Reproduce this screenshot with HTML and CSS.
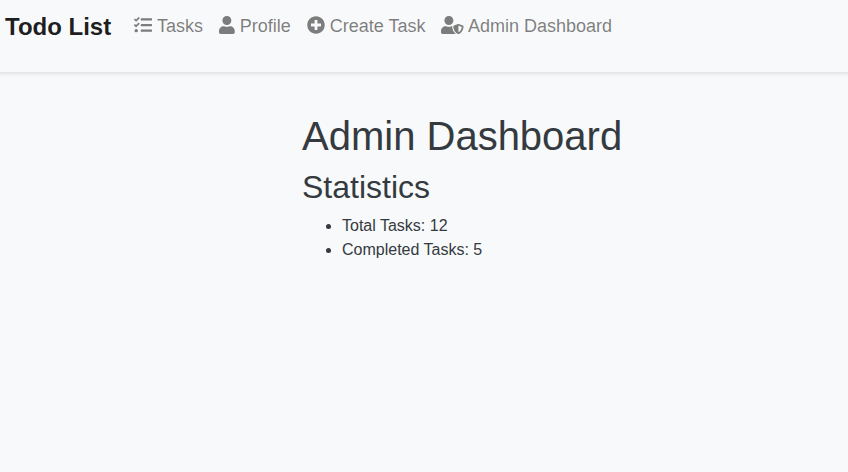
FILE: index.html
```html
<!DOCTYPE html>
<html lang="en">
<head>
<meta charset="utf-8">
<title>Todo List</title>
<link rel="stylesheet" href="styles.css">
</head>
<body>
<nav class="navbar">
  <a class="brand">Todo List</a>
  <ul class="nav">
    <li><a><svg class="icon" viewBox="0 0 512 512"><path d="M139.610 35.500a12 12 0 0 0-17 0L58.930 98.810l-22.700-22.120a12 12 0 0 0-17 0L3.530 92.410a12 12 0 0 0 0 17l47.590 47.400a12.780 12.780 0 0 0 17.610 0l15.590-15.620L156.520 69a12.090 12.090 0 0 0 .09-17zm0 159.190a12 12 0 0 0-17 0l-63.680 63.720-22.700-22.100a12 12 0 0 0-17 0L3.530 252a12 12 0 0 0 0 17L51 316.500a12.770 12.770 0 0 0 17.600 0l15.700-15.690 72.200-72.220a12 12 0 0 0 .09-16.900zM64 368c-26.490 0-48.590 21.500-48.590 48S37.530 464 64 464a48 48 0 0 0 0-96zm432 16H208a16 16 0 0 0-16 16v32a16 16 0 0 0 16 16h288a16 16 0 0 0 16-16v-32a16 16 0 0 0-16-16zm0-320H208a16 16 0 0 0-16 16v32a16 16 0 0 0 16 16h288a16 16 0 0 0 16-16V80a16 16 0 0 0-16-16zm0 160H208a16 16 0 0 0-16 16v32a16 16 0 0 0 16 16h288a16 16 0 0 0 16-16v-32a16 16 0 0 0-16-16z"/></svg> Tasks</a></li>
    <li><a><svg class="icon icon-user" viewBox="0 0 448 512"><path d="M224 256c70.700 0 128-57.300 128-128S294.700 0 224 0 96 57.300 96 128s57.300 128 128 128zm89.600 32h-16.700c-22.200 10.200-46.900 16-72.900 16s-50.600-5.800-72.900-16h-16.700C60.200 288 0 348.200 0 422.400V464c0 26.500 21.500 48 48 48h352c26.500 0 48-21.500 48-48v-41.600c0-74.200-60.200-134.400-134.400-134.400z"/></svg> Profile</a></li>
    <li><a><svg class="icon" viewBox="0 0 512 512"><path d="M256 8C119 8 8 119 8 256s111 248 248 248 248-111 248-248S393 8 256 8zm144 276c0 6.600-5.400 12-12 12h-92v92c0 6.600-5.400 12-12 12h-56c-6.600 0-12-5.400-12-12v-92h-92c-6.600 0-12-5.400-12-12v-56c0-6.600 5.400-12 12-12h92v-92c0-6.600 5.400-12 12-12h56c6.600 0 12 5.400 12 12v92h92c6.600 0 12 5.400 12 12v56z"/></svg> Create Task</a></li>
    <li><a><svg class="icon icon-shield" viewBox="0 0 640 512"><path d="M622.300 271.100l-115.200-45c-4.100-1.600-12.600-3.700-22.200 0l-115.200 45c-10.700 4.200-17.700 14-17.700 24.900 0 111.600 68.700 188.800 132.900 213.900 9.600 3.700 18 1.600 22.200 0C558.400 489.900 640 420.500 640 296c0-10.900-7-20.700-17.700-24.900zM496 462.400V273.300l95.500 37.300c-5.600 87.100-60.900 135.400-95.500 151.800zM224 256c70.700 0 128-57.300 128-128S294.700 0 224 0 96 57.300 96 128s57.300 128 128 128zm96 40c0-2.500.8-4.800 1.100-7.200-2.500-.1-4.900-.8-7.500-.8h-16.700c-22.200 10.200-46.900 16-72.900 16s-50.600-5.800-72.900-16h-16.700C60.200 288 0 348.200 0 422.400V464c0 26.500 21.500 48 48 48h352c6.800 0 13.300-1.500 19.200-4-54-42.900-99.200-116.700-99.200-212z"/></svg> Admin Dashboard</a></li>
  </ul>
</nav>
<main class="content">
  <h1>Admin Dashboard</h1>
  <h2>Statistics</h2>
  <ul>
    <li>Total Tasks: 12</li>
    <li>Completed Tasks: 5</li>
  </ul>
</main>
</body>
</html>
```

FILE: styles.css
```css
* { box-sizing: border-box; }
body {
  margin: 0;
  min-height: 100vh;
  overflow: hidden;
  background: #f8f9fa;
  color: #343a40;
  font: 400 16px/1.5 "Liberation Sans", Arial, sans-serif;
}
.navbar {
  display: flex;
  align-items: flex-start;
  height: 72px;
  margin: 0 -11px;
  padding: 9px 16px;
  background: #f8f9fa;
  box-shadow: 0 2px 4px rgba(0, 0, 0, .1);
}
.brand {
  margin-right: 15px;
  color: rgba(0, 0, 0, .9);
  font-size: 24px;
  font-weight: 700;
  line-height: 36px;
}
.nav {
  display: flex;
  margin: 0;
  padding: 0;
  list-style: none;
}
.nav a {
  display: block;
  padding: 4px 8px;
  color: rgba(0, 0, 0, .5);
  font-size: 18px;
  line-height: 27px;
  white-space: nowrap;
}
.icon {
  width: 18px;
  height: 18px;
  fill: currentColor;
  vertical-align: -2.25px;
}
.icon-user { width: 15.75px; }
.icon-shield { width: 22.5px; }
.content {
  width: 546px;
  margin: 40px 0 0 302px;
}
h1, h2 {
  margin: 0 0 8px;
  font-weight: 400;
  line-height: 1.2;
}
h1 { font-size: 40px; }
h2 { font-size: 32px; }
.content ul {
  margin: 0;
  padding-left: 40px;
}
```
